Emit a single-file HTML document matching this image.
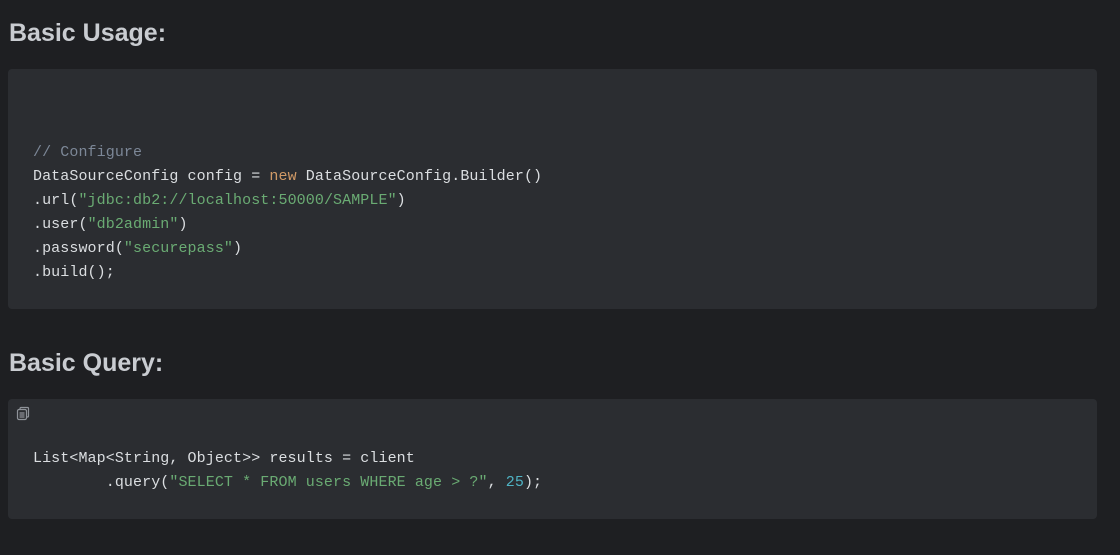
<!DOCTYPE html>
<html><head><style>
body{margin:0;background:#1e1f22;width:1120px;height:555px;overflow:hidden;font-family:"Liberation Sans",sans-serif;}
h2{position:absolute;left:9px;margin:0;color:#c9ccd1;font-size:25px;font-weight:bold;line-height:28px;}
.blk{position:absolute;left:8px;width:1089px;background:#2b2d31;border-radius:4px;}
pre{position:absolute;left:33px;margin:0;font-family:"Liberation Mono",monospace;font-size:15px;line-height:24px;color:#dbdee1;letter-spacing:0.09px;}
.c{color:#7c8797}.k{color:#d19a66}.s{color:#6aab73}.n{color:#4fb3c4}
</style></head><body>
<h2 style="top:19px">Basic Usage:</h2>
<div class="blk" style="top:69px;height:240px"></div>
<pre style="top:141px"><span class="c">// Configure</span>
DataSourceConfig config = <span class="k">new</span> DataSourceConfig.Builder()
.url(<span class="s">"jdbc:db2://localhost:50000/SAMPLE"</span>)
.user(<span class="s">"db2admin"</span>)
.password(<span class="s">"securepass"</span>)
.build();</pre>
<h2 style="top:349px">Basic Query:</h2>
<div class="blk" style="top:399px;height:120px"></div>
<svg style="position:absolute;left:16px;top:406px" width="16" height="16" viewBox="0 0 16 16" fill="none" stroke="#8f9399" stroke-width="1.2"><rect x="1.5" y="3.5" width="9" height="10" rx="1.5"/><path d="M4 3V2.5A1 1 0 0 1 5 1.5h6.5a1 1 0 0 1 1 1V10a1 1 0 0 1-1 1H11"/><path d="M3.5 7h5M3.5 9h5M3.5 11h5"/></svg>
<pre style="top:447px">List&lt;Map&lt;String, Object&gt;&gt; results = client
        .query(<span class="s">"SELECT * FROM users WHERE age &gt; ?"</span>, <span class="n">25</span>);</pre>
</body></html>
